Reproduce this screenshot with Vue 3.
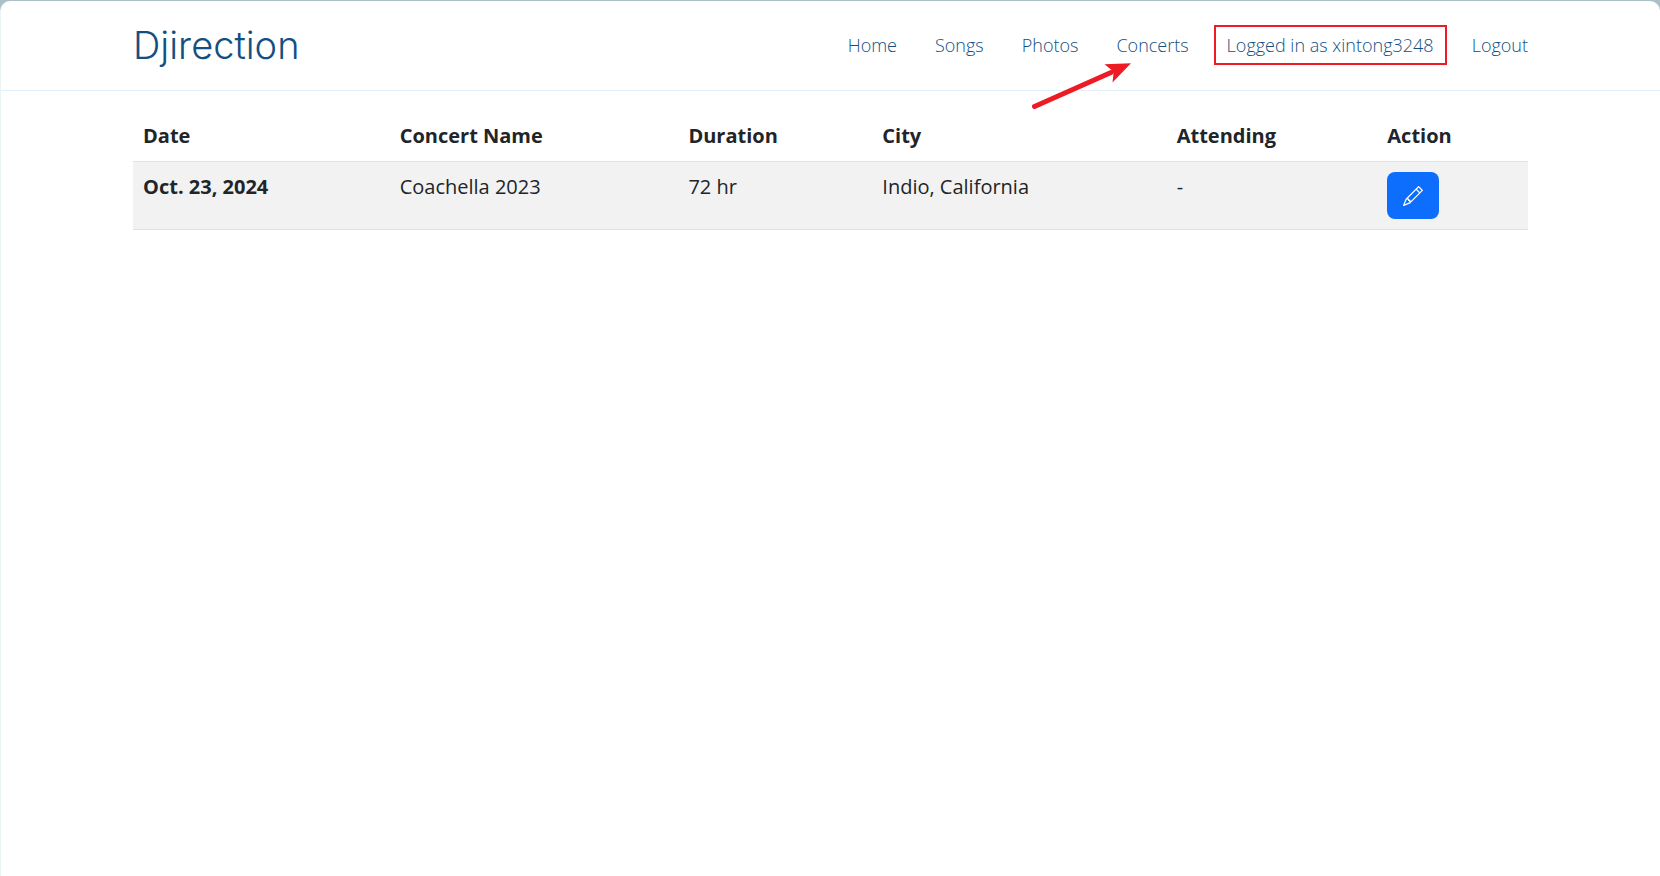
<script setup>
const links = [
  { label: 'Home' },
  { label: 'Songs' },
  { label: 'Photos' },
  { label: 'Concerts', arrow: true },
  { label: 'Logged in as xintong3248', boxed: true },
  { label: 'Logout' },
]

const concerts = [
  { date: 'Oct. 23, 2024', name: 'Coachella 2023', duration: '72 hr', city: 'Indio, California', attending: '-' },
]
</script>

<template>
  <div class="page">
    <header class="header">
      <div class="container bar">
        <a class="logo" href="#">Djirection</a>
        <nav>
          <ul class="links">
            <li v-for="link in links" :key="link.label">
              <a href="#" :class="{ boxed: link.boxed }">{{ link.label }}</a>
              <svg v-if="link.arrow" class="arrow" width="102" height="48" viewBox="0 0 102 48" aria-hidden="true">
                <path d="M3.5 44.5L80 10.5" fill="none" stroke="#ed1c24" stroke-width="5" stroke-linecap="round" />
                <path d="M100 1.2L73.5 2.2L80.5 8L82.5 11.5L81.5 20.5Z" fill="#ed1c24" />
              </svg>
            </li>
          </ul>
        </nav>
      </div>
    </header>

    <main class="container content">
      <table class="concerts">
        <colgroup>
          <col class="c-date" /><col class="c-name" /><col class="c-duration" />
          <col class="c-city" /><col class="c-attending" /><col />
        </colgroup>
        <thead>
          <tr>
            <th scope="col">Date</th>
            <th scope="col">Concert Name</th>
            <th scope="col">Duration</th>
            <th scope="col">City</th>
            <th scope="col">Attending</th>
            <th scope="col">Action</th>
          </tr>
        </thead>
        <tbody>
          <tr v-for="c in concerts" :key="c.name">
            <th scope="row">{{ c.date }}</th>
            <td>{{ c.name }}</td>
            <td>{{ c.duration }}</td>
            <td>{{ c.city }}</td>
            <td>{{ c.attending }}</td>
            <td>
              <button class="edit" type="button" aria-label="Edit">
                <svg width="20" height="20" viewBox="0 0 16 16" fill="currentColor" aria-hidden="true">
                  <path d="M12.146.146a.5.5 0 0 1 .708 0l3 3a.5.5 0 0 1 0 .708l-10 10a.5.5 0 0 1-.168.11l-5 2a.5.5 0 0 1-.65-.65l2-5a.5.5 0 0 1 .11-.168l10-10zM11.207 2.5 13.5 4.793 14.793 3.5 12.5 1.207 11.207 2.5zm1.586 3L10.5 3.207 4 9.707V10h.5a.5.5 0 0 1 .5.5v.5h.5a.5.5 0 0 1 .5.5v.5h.293l6.5-6.5zm-9.761 5.175-.106.106-1.528 3.821 3.821-1.528.106-.106A.5.5 0 0 1 5 12.5V12h-.5a.5.5 0 0 1-.5-.5V11h-.5a.5.5 0 0 1-.468-.325z" />
                </svg>
              </button>
            </td>
          </tr>
        </tbody>
      </table>
    </main>
  </div>
</template>

<style>
body {
  background: #a9c1c6;
}
</style>

<style scoped>
.page {
  box-sizing: border-box;
  min-height: calc(100vh - 1px);
  margin-top: 1px;
  border-left: 1px solid #ecf3f5;
  border-radius: 10px 10px 0 0;
  background: #fff;
  color: #212529;
  font: 20px/30px "Open Sans", sans-serif;
}

.container {
  width: 84.1%;
  max-width: 1395px;
  margin: 0 auto;
}

.header {
  border-bottom: 1px solid #e1f0fa;
}

.bar {
  display: flex;
  align-items: center;
  justify-content: space-between;
  padding: 22px 0 23px;
}

.logo {
  color: #124f82;
  font: 300 38px/44px Inter, sans-serif;
  text-decoration: none;
}

.links {
  display: flex;
  align-items: center;
  gap: 38px;
  height: 44px;
  margin: 0;
  padding: 0;
  list-style: none;
}

.links li {
  position: relative;
}

.links a {
  display: block;
  color: #124f82;
  font-size: 18px;
  font-weight: 300;
  line-height: 28px;
  text-decoration: none;
  white-space: nowrap;
}

.links .boxed {
  margin: 0 -13px;
  padding: 4px 11px;
  border: 2px solid #ed1c24;
}

.arrow {
  position: absolute;
  top: 31px;
  right: 56px;
  pointer-events: none;
}

.content {
  padding-top: 20px;
}

.concerts {
  width: 100%;
  table-layout: fixed;
  border-collapse: separate;
  border-spacing: 0;
}

.c-date { width: 18.4%; }
.c-name { width: 20.7%; }
.c-duration { width: 13.9%; }
.c-city { width: 21.1%; }
.c-attending { width: 15.1%; }

th,
td {
  padding: 10px;
  border-bottom: 1px solid #dee2e6;
  text-align: left;
  vertical-align: top;
}

tbody th,
tbody td {
  background: #f2f2f2;
}

.edit {
  display: flex;
  align-items: center;
  justify-content: center;
  width: 52px;
  height: 47px;
  padding: 0;
  border: 0;
  border-radius: 8px;
  background: #0d6efd;
  color: #fff;
  cursor: pointer;
}
</style>
